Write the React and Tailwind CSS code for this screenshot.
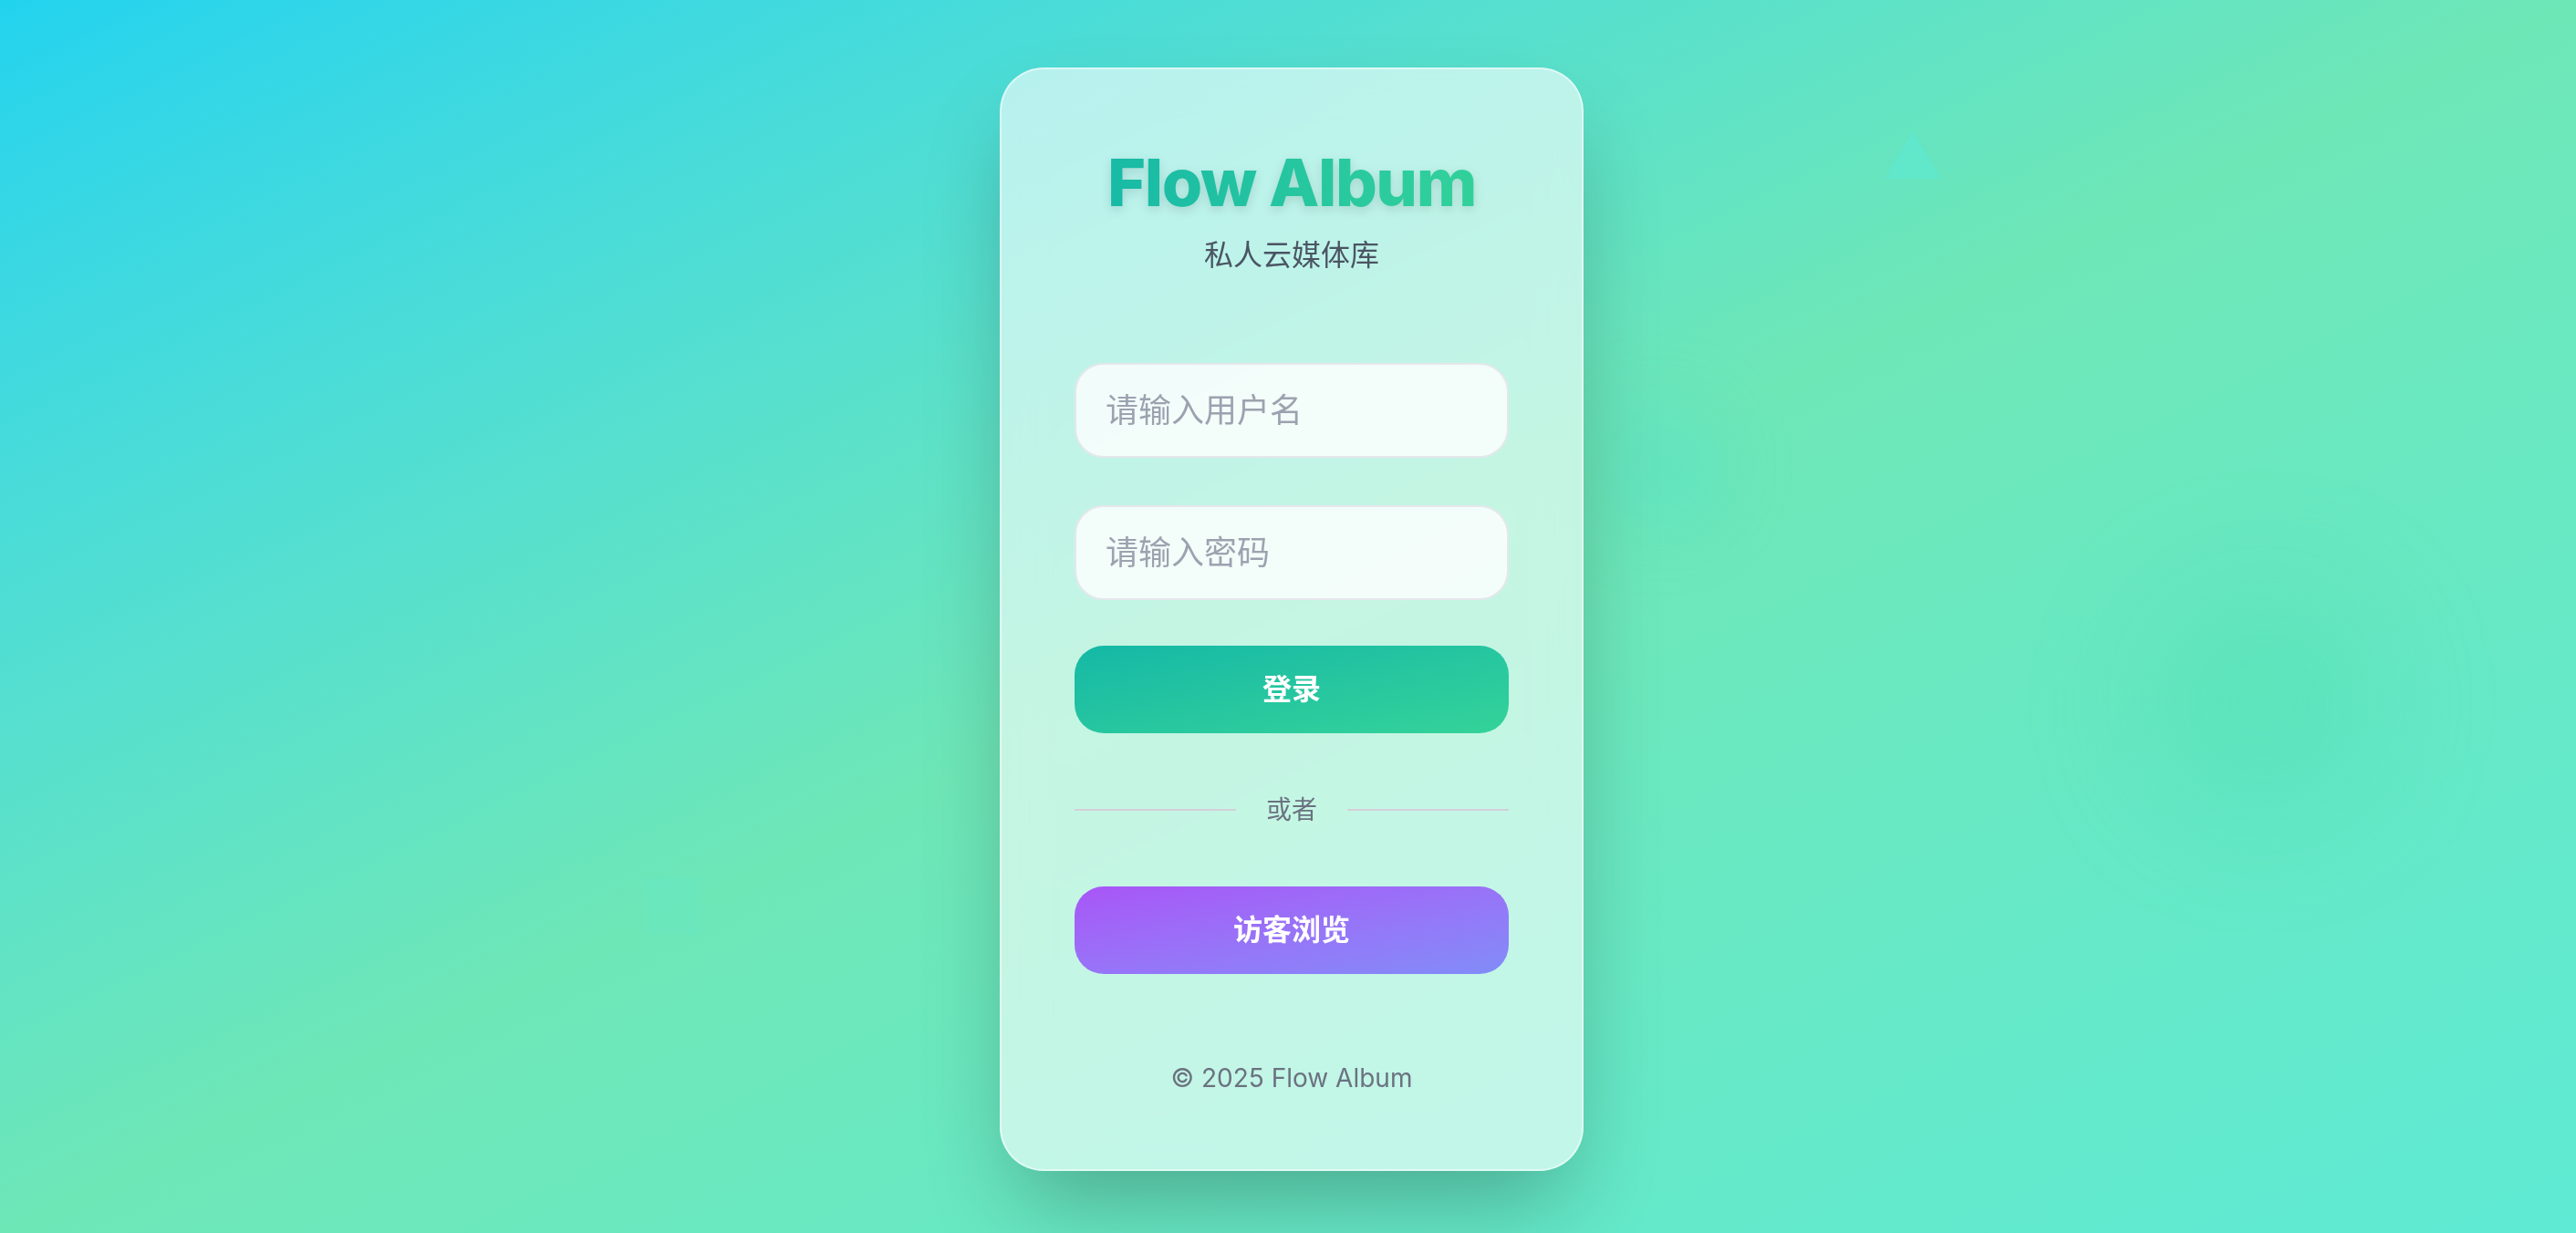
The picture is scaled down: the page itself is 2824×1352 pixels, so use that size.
export default function App() {
  return (
    <div
      className="relative h-[1352px] w-full overflow-hidden bg-linear-to-br from-[#22d3ee] via-[#6ee7b7] to-[#5eead4] flex items-center justify-center"
      style={{ fontFamily: 'Inter, "Noto Sans CJK SC", sans-serif' }}
    >
      {/* floating shapes */}
      <svg
        className="absolute left-[2064px] top-[142px] blur-[1px]"
        width="66"
        height="56"
        viewBox="0 0 66 56"
      >
        <polygon points="33,2 64,54 2,54" fill="rgba(94,234,212,0.6)" />
      </svg>
      <div className="absolute left-[2350px] top-[640px] h-[260px] w-[260px] rounded-full bg-[#34d399]/20 blur-3xl" />
      <div className="absolute left-[1750px] top-[440px] h-[140px] w-[140px] rounded-full bg-[#22d3ee]/15 blur-2xl" />
      <div className="absolute left-[706px] top-[962px] h-[64px] w-[64px] rounded-md bg-[#5eead4]/20 blur-[2px]" />

      <div className="relative ml-[8px] mt-[6px] w-[640px] rounded-[48px] border-2 border-white/50 bg-white/60 backdrop-blur-xl px-[80px] pt-[84px] pb-[80px] shadow-[0_50px_100px_-20px_rgba(0,0,0,0.28)] flex flex-col">
        <h1 className="text-center text-[72px] leading-[80px] font-[760] tracking-[-0.02em] bg-linear-to-r from-[#14b8a6] to-[#34d399] bg-clip-text text-transparent drop-shadow-[0_4px_6px_rgba(0,0,0,0.12)]">
          Flow Album
        </h1>
        <p className="mt-[16px] text-center text-[32px] leading-[48px] text-[#4b5563]">私人云媒体库</p>

        <input
          type="text"
          placeholder="请输入用户名"
          className="mt-[94px] h-[104px] w-full rounded-[32px] border-2 border-[#e5e7eb] bg-white/80 px-[32px] text-[36px] text-[#1f2937] placeholder:text-[#9ca3af] outline-none"
        />
        <input
          type="password"
          placeholder="请输入密码"
          className="mt-[52px] h-[104px] w-full rounded-[32px] border-2 border-[#e5e7eb] bg-white/80 px-[32px] text-[36px] text-[#1f2937] placeholder:text-[#9ca3af] outline-none"
        />

        <button className="mt-[50px] h-[96px] w-full rounded-[32px] bg-linear-to-br from-[#14b8a6] to-[#34d399] text-[32px] font-bold text-white">
          登录
        </button>

        <div className="mt-[64px] flex h-[40px] items-center">
          <div className="h-[2px] flex-1 bg-[#d4cfd9]" />
          <span className="px-[33px] text-[28px] leading-[40px] text-[#6b7280]">或者</span>
          <div className="h-[2px] flex-1 bg-[#d4cfd9]" />
        </div>

        <button className="mt-[64px] h-[96px] w-full rounded-[32px] bg-linear-to-br from-[#a855f7] to-[#818cf8] text-[32px] font-bold text-white">
          访客浏览
        </button>

        <p className="mt-[94px] text-center text-[28px] leading-[40px] text-[#6b7280]">© 2025 Flow Album</p>
      </div>
    </div>
  );
}
